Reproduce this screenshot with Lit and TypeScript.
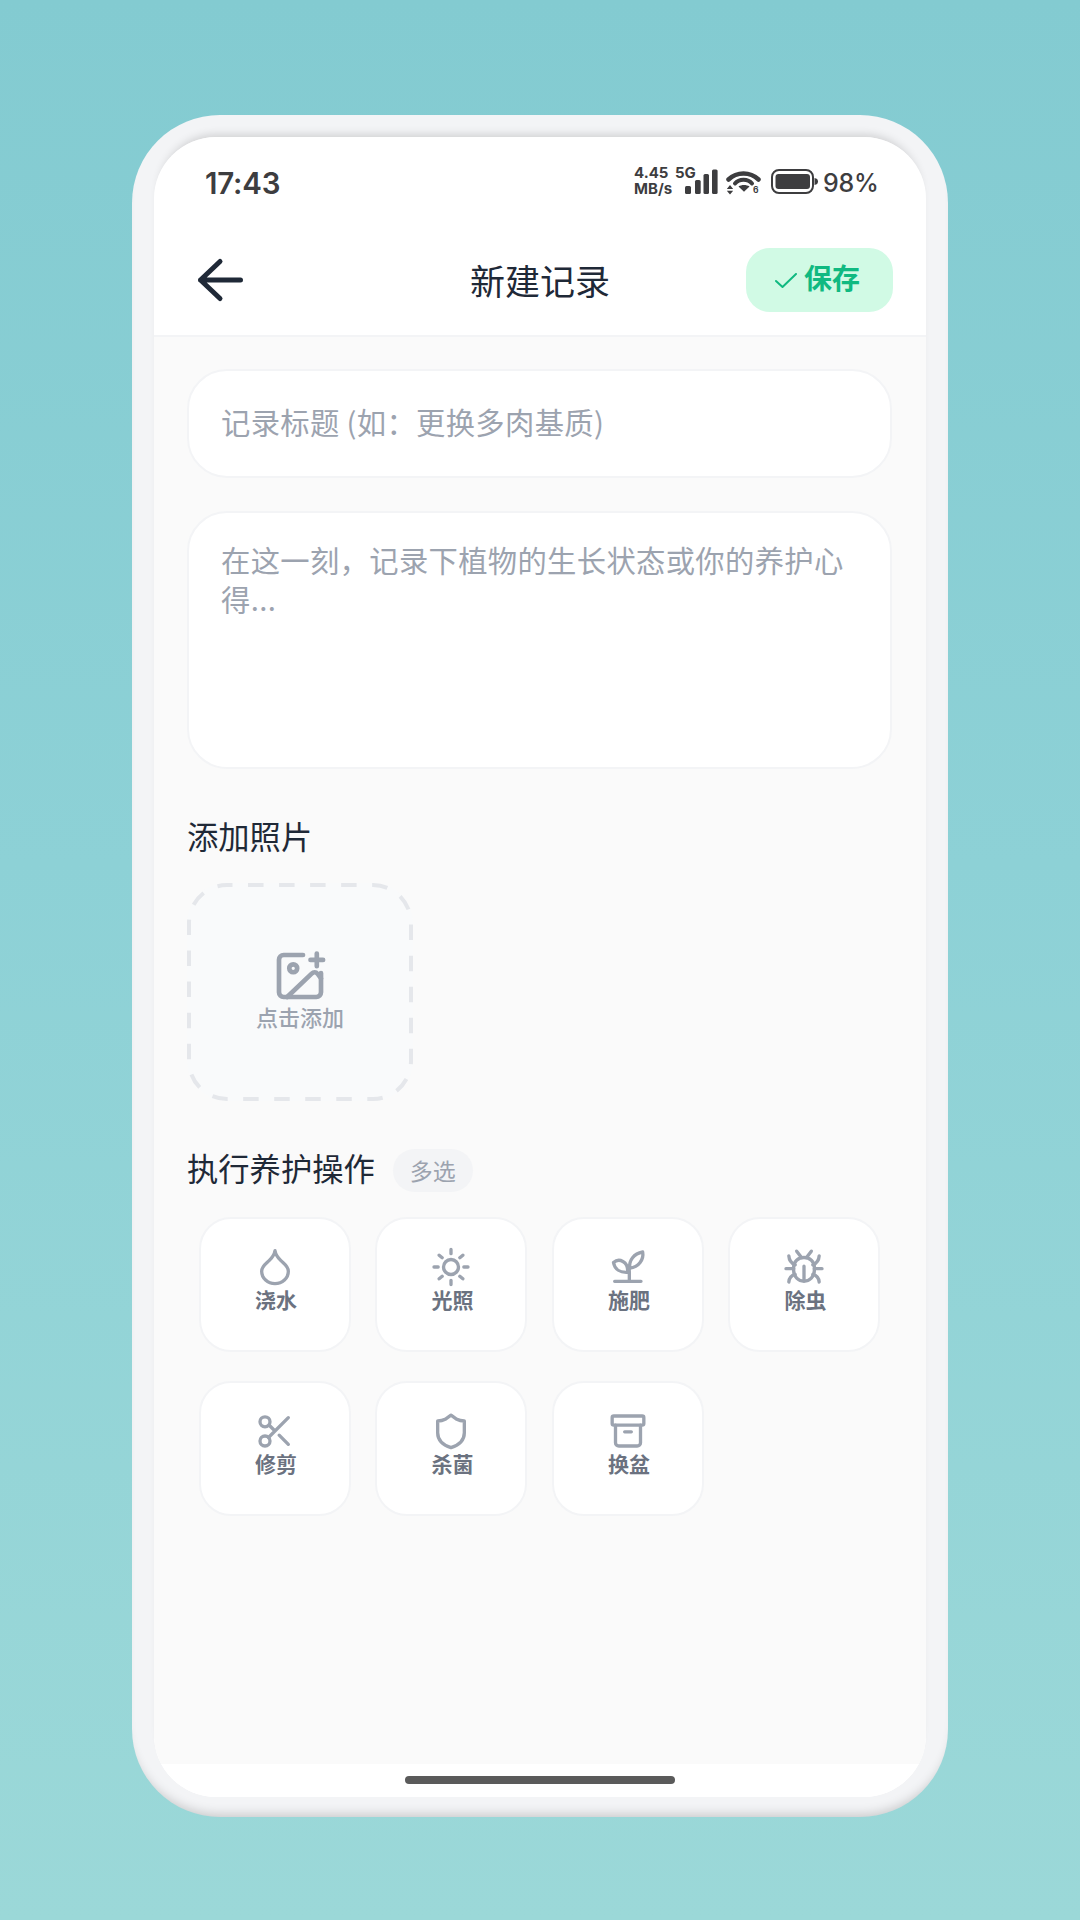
import { LitElement, html, css, svg } from "lit";
import { customElement } from "lit/decorators.js";

const icons: Record<string, any> = {
  drop: svg`<path d="M12 2.200c-.4 2.800-1.900 4.300-3.400 5.800C6.800 9.800 4 11.500 4 14.500a8 7.500 0 0 0 16 0c0-3-2.800-4.700-4.600-6.500-1.500-1.500-3-3-3.400-5.800z"/>`,
  sun: svg`<circle cx="12" cy="12" r="4.500"/><path d="M12 1.500v2.500M12 20v2.500M1.800 12h2.500M19.700 12h2.500M4.900 4.900l1.800 1.500M17.300 17.600l1.800 1.500M4.900 19.100l1.800-1.500M17.300 6.400l1.800-1.500"/>`,
  sprout: svg`<path d="M4 20.600h15.800M12.800 20.600v-5.500c0-1-.3-2 .2-2.400"/><path d="M11.800 15.200C7.500 15.500 4 13.500 3.300 9.300 6.500 6.500 12.300 8.500 11.800 15.200z"/><path d="M13 12.700C12.500 8 15.500 4 20.800 3c.8 4.500-2.300 9-7.800 9.700z"/>`,
  bug: svg`<path d="M7.600 2.500 10.500 6.300M16.400 2.500 13.500 6.300"/><path d="M5.800 12c0-3.200 2.700-5.700 6.200-5.700s6.200 2.500 6.200 5.700v2.300a6.200 6.200 0 0 1-12.400 0z"/><path d="M12 11.500v9M1.200 13h4.600M18.200 13h4.600M2.900 5.300c.2 2.800 1.500 4.500 3.800 5.400M21.100 5.300c-.2 2.800-1.500 4.500-3.800 5.400M2.900 21c.2-2.500 1.500-4 3.800-4.600M21.100 21c-.2-2.500-1.500-4-3.800-4.600"/>`,
  scissors: svg`<circle cx="6" cy="6.500" r="3"/><circle cx="6" cy="18" r="3"/><path d="M20 4 8.100 15.900M14.500 14.500 20 20M8.400 8.400 12 12"/>`,
  shield: svg`<path d="M12 2.500 8.500 5C7 5.800 5.500 6 4 6v7c0 5 3.500 7.500 8 9 4.500-1.500 8-4 8-9V6c-1.500 0-3-.2-4.500-1z"/>`,
  box: svg`<rect x="2.500" y="3" width="19" height="5.500" rx="1"/><path d="M4.500 8.500V19a2 2 0 0 0 2 2h11a2 2 0 0 0 2-2V8.500M10 12.500h4"/>`,
};

const actions: [string, string][] = [
  ["drop", "浇水"], ["sun", "光照"], ["sprout", "施肥"], ["bug", "除虫"],
  ["scissors", "修剪"], ["shield", "杀菌"], ["box", "换盆"],
];

@customElement("app-root")
export class AppRoot extends LitElement {
  static styles = css`
    :host {
      display: block; height: 1920px; box-sizing: border-box; padding: 115px 132px 0;
      background: linear-gradient(180deg, #83cbd1 0%, #8dd1d6 45%, #9bd8d8 100%);
      font-family: "Noto Sans CJK SC", "Noto Sans", sans-serif;
    }
    .frame {
      width: 816px; height: 1702px; box-sizing: border-box; padding: 22px 22px 20px;
      border-radius: 88px; background: #f3f4f6;
      box-shadow: inset 0 -10px 12px -8px rgba(0,0,0,.2);
    }
    .screen {
      height: 100%; border-radius: 62px; overflow: hidden; background: #fff;
      display: flex; flex-direction: column;
    }
    .wrap { height: 100%; border-radius: 62px; box-shadow: 0 -8px 10px -6px rgba(0,0,0,.16); }
    .status { height: 83px; flex: none; box-sizing: border-box; display: flex; align-items: flex-start; justify-content: space-between; padding: 30px 49px 0 51px; color: #3d3d3f; }
    .time { font: 600 29.500px/32px Inter, sans-serif; letter-spacing: -.2px; }
    .sys { display: flex; align-items: flex-start; height: 32px; }
    .speed { font: 700 15px/16px Inter, sans-serif; width: 41px; white-space: nowrap; margin-top: -2.500px; }
    .g5 { font: 700 15px/16px Inter, sans-serif; margin-top: -2.500px; margin-right: -10px; width: 20px; }
    .sys svg { display: block; flex: none; fill: #3d3d3f; }
    .sig { margin-top: 2px; }
    .wifi { margin-top: 3px; margin-left: 8px; }
    .bat { margin-top: 2px; margin-left: 9px; }
    .pct { font: 500 25px/32px Inter, sans-serif; letter-spacing: -.3px; margin-left: 4px; width: 54px; white-space: nowrap; }
    .bar {
      height: 117px; flex: none; box-sizing: border-box; border-bottom: 2px solid #f3f4f6;
      display: flex; align-items: center; justify-content: space-between; padding: 0 33px 0 42px; position: relative;
    }
    .back { width: 52px; height: 52px; stroke: #1f2937; fill: none; stroke-width: 5px; stroke-linecap: round; stroke-linejoin: round; display: block; margin-top: 5px; }
    .title { position: absolute; left: 0; right: 0; top: 38px; text-align: center; font-size: 35px; line-height: 44px; color: #1f2937; font-weight: 400; }
    .save {
      width: 147px; height: 64px; box-sizing: border-box; padding-right: 4px; border-radius: 24px; background: #d1fae5; color: #10b981;
      display: flex; align-items: center; justify-content: center; gap: 7px; font-size: 28px; line-height: 40px; font-weight: 700; margin-top: 5px;
    }
    .save span { position: relative; top: -3px; }
    .save svg { width: 22px; height: 15px; fill: none; stroke: #10b981; stroke-width: 2px; stroke-linecap: round; stroke-linejoin: round; flex: none; }
    .body { flex: 1; background: #fafafa; padding: 32px 34px 0 33px; display: flex; flex-direction: column; }
    .field {
      background: #fff; border: 2px solid #f3f4f6; border-radius: 40px; box-sizing: border-box;
      color: #9ca3af; font-size: 29.300px; letter-spacing: .35px; line-height: 39px; padding: 0 32px;
    }
    .one { height: 109px; flex: none; display: flex; align-items: center; white-space: pre; padding-bottom: 4px; }
    .area { height: 258px; flex: none; margin-top: 33px; padding-top: 27px; }
    .h { font-size: 31.300px; line-height: 40px; color: #1f2937; font-weight: 400; }
    .photos-h { margin-top: 47px; }
    .add {
      position: relative; width: 226px; height: 218px; flex: none; box-sizing: border-box; padding-bottom: 6px; margin-top: 27px; border-radius: 40px; background: #f9fafb;
      display: flex; flex-direction: column; align-items: center; justify-content: center; color: #9ca3af; font-size: 22px; line-height: 30px; font-weight: 500;
    }
    .dash { position: absolute; inset: 0; width: 100%; height: 100%; fill: none; stroke: #e5e7eb; stroke-width: 4px; stroke-dasharray: 15.500 15.530; stroke-dashoffset: 10; }
    .add .pic { width: 56px; height: 56px; fill: none; stroke: #9ca3af; stroke-width: 2px; stroke-linecap: round; stroke-linejoin: round; margin-bottom: -3px; position: relative; }
    .add div { position: relative; }
    .ops-h { display: flex; align-items: center; gap: 18px; margin-top: 47px; height: 40px; }
    .tag { width: 80px; height: 43px; flex: none; margin-top: 4px; border-radius: 22px; background: #f3f4f6; color: #9ca3af; font-size: 23px; line-height: 43px; text-align: center; }
    .grid { display: grid; grid-template-columns: repeat(4, 152px); column-gap: 24.500px; row-gap: 29px; margin: 28.500px 0 0 11.500px; }
    .chip {
      height: 135px; box-sizing: border-box; border: 2px solid #f3f4f6; border-radius: 32px; background: #fff;
      display: flex; flex-direction: column; align-items: center; justify-content: center; color: #6b7280; font-size: 21px; line-height: 28px; font-weight: 700; padding-bottom: 8px;
    }
    .chip svg { width: 40px; height: 40px; fill: none; stroke: #9ca3af; stroke-width: 2px; stroke-linecap: round; stroke-linejoin: round; display: block; margin-bottom: -2px; }
    .chip div { padding-left: 3px; }
    .foot { height: 33px; flex: none; background: #fff; display: flex; justify-content: center; padding-top: 12px; box-sizing: border-box; }
    .home { width: 270px; height: 8px; border-radius: 4px; background: #5a5a5a; }
  `;

  render() {
    return html`<div class="frame"><div class="wrap"><div class="screen">
      <div class="status">
        <div class="time">17:43</div>
        <div class="sys">
          <div class="speed">4.45<br />MB/s</div>
          <div class="g5">5G</div>
          <svg class="sig" width="33" height="26" viewBox="0 0 33 26"><rect x="0" y="17" width="6" height="8" rx="1.500"/><rect x="10" y="11" width="5.700" height="14" rx="1.500"/><rect x="18.500" y="5" width="5.500" height="20" rx="1.500"/><rect x="27" y="0.500" width="5.600" height="24.500" rx="1.500"/></svg>
          <svg class="wifi" width="36" height="25" viewBox="0 0 36 25"><path d="M2.500 9.500C11 1.500 24 1.500 32.500 9.500" fill="none" stroke="#3d3d3f" stroke-width="4.500" stroke-linecap="round"/><path d="M9 13.500C13 8.500 22 8.500 26 13.500" fill="none" stroke="#3d3d3f" stroke-width="4" stroke-linecap="round"/><path d="M12.500 16.500c3-2 8-2 11 0L18 21.800z"/><path d="M.8 19l3.200-4 3.200 4zM.8 20.700l3.200 3.800 3.200-3.800z"/><text x="27" y="23.300" font-family="Inter, sans-serif" font-size="8.500" font-weight="700">6</text></svg>
          <svg class="bat" width="48" height="25" viewBox="0 0 48 25"><rect x="1" y="1" width="41" height="23" rx="7" fill="none" stroke="#3d3d3f" stroke-width="2"/><rect x="4.500" y="5" width="34.500" height="15" rx="3"/><path d="M43.500 9c2.300.3 3.500 1.500 3.500 3.500s-1.200 3.200-3.500 3.500z"/></svg>
          <div class="pct">98%</div>
        </div>
      </div>
      <div class="bar">
        <svg class="back" viewBox="0 0 52 52"><path d="M44.500 26H4.500M24 7.500 4.500 26 24 44.500"/></svg>
        <div class="title">新建记录</div>
        <div class="save"><svg viewBox="0 0 22 15"><path d="M1 8l6.500 6L21 1"/></svg><span>保存</span></div>
      </div>
      <div class="body">
        <div class="field one">记录标题 (如：更换多肉基质)</div>
        <div class="field area">在这一刻，记录下植物的生长状态或你的养护心得...</div>
        <div class="h photos-h">添加照片</div>
        <div class="add">
          <svg class="dash" viewBox="0 0 226 218"><rect x="2" y="2" width="222" height="214" rx="38"/></svg>
          <svg class="pic" viewBox="0 0 24 24"><path d="M13.300 3H5a2 2 0 0 0-2 2v14a2 2 0 0 0 2 2h14a2 2 0 0 0 2-2v-8.300"/><path d="M16.500 5.100h5.400M19.200 2.400v5.400"/><circle cx="9.100" cy="8.700" r="1.700"/><path d="M6.500 21 17 11c.8-.8 1.800-.8 2.500 0L21 13"/></svg>
          <div>点击添加</div>
        </div>
        <div class="h ops-h">执行养护操作<span class="tag">多选</span></div>
        <div class="grid">
          ${actions.map(([i, t]) => html`<div class="chip"><svg viewBox="0 0 24 24">${icons[i]}</svg><div>${t}</div></div>`)}
        </div>
      </div>
      <div class="foot"><div class="home"></div></div>
    </div></div></div>`;
  }
}
